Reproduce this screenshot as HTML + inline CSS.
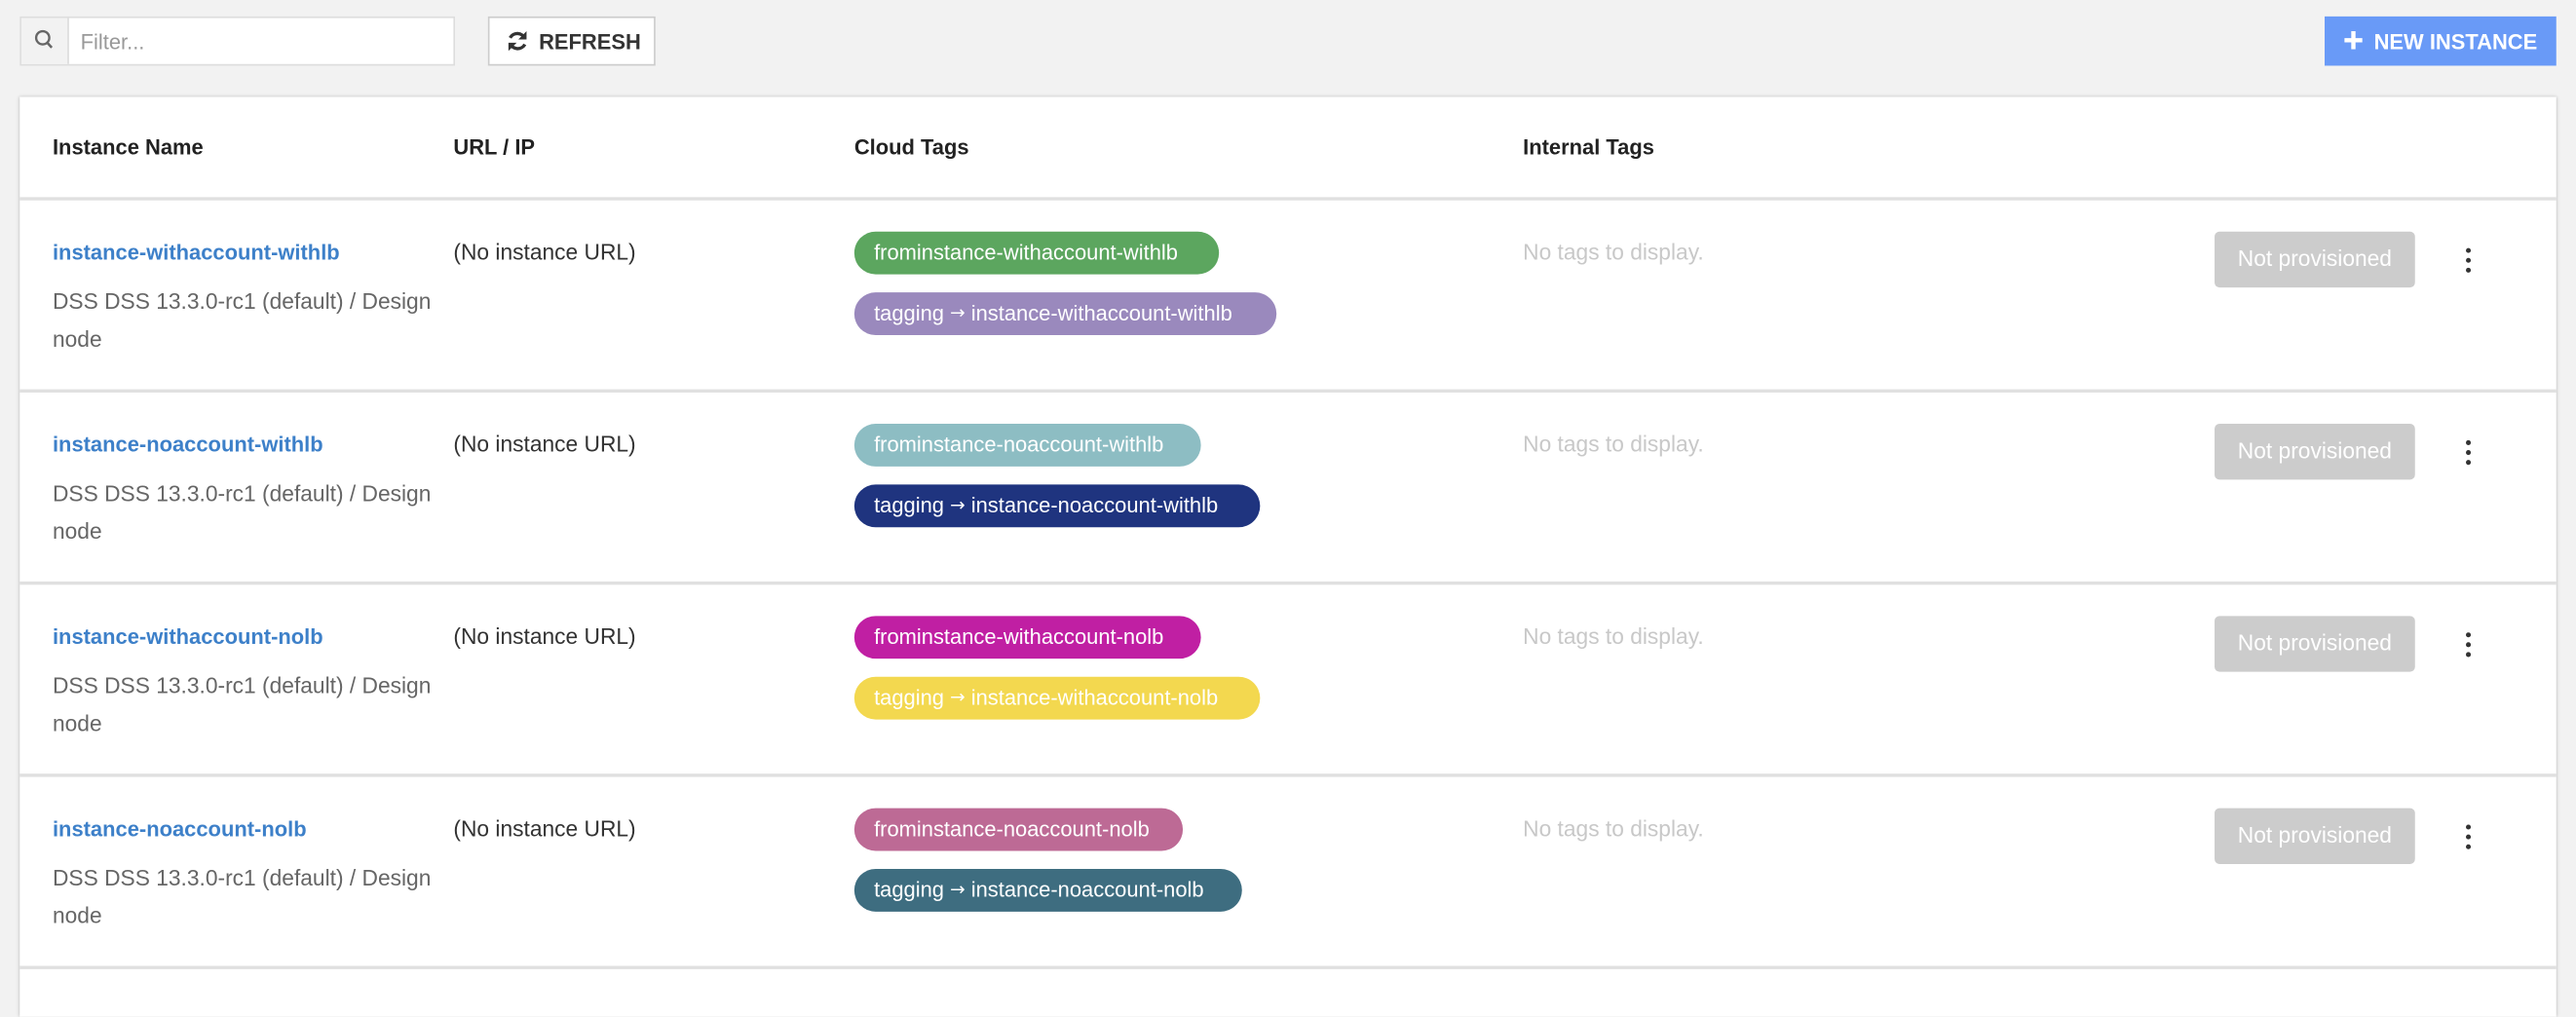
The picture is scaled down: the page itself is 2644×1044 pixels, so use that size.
<!DOCTYPE html>
<html><head><meta charset="utf-8"><style>
html,body{margin:0;padding:0;width:2644px;height:1020px;overflow:hidden;background:#f2f2f2;}
#w{position:absolute;left:0;top:0;width:1568px;height:605px;transform:scale(1.68622);transform-origin:0 0;font-family:"Liberation Sans",sans-serif;}
.a{position:absolute;white-space:nowrap;}
.filter{left:12px;top:10px;width:263px;height:28px;border:1px solid #ddd;background:#fff;}
.filter .ic{position:absolute;left:0;top:0;width:28px;height:28px;background:#f2f2f2;border-right:1px solid #ddd;}
.filter .ph{position:absolute;left:36px;top:7px;font-size:13px;color:#999;}
.btn{left:297px;top:10px;width:100px;height:28px;border:1px solid #ccc;background:#fff;font-size:13px;font-weight:bold;color:#333;}
.nb{left:1415px;top:10px;width:141px;height:30px;background:#699af7;color:#fff;font-size:13px;font-weight:bold;}
.card{left:12px;top:59px;width:1544px;height:560px;background:#fff;box-shadow:0 0 2px rgba(0,0,0,.25);}
.h{font-size:13px;font-weight:bold;color:#222;top:82px;}
.sep{left:12px;width:1544px;height:2px;background:#e0e0e0;}
.nm{font-size:13px;font-weight:bold;color:#3d80c9;left:32px;}
.ds{font-size:13.5px;color:#666;left:32px;line-height:23px;}
.url{font-size:13.5px;color:#333;left:276px;}
.nt{font-size:13.5px;color:#c8c8c8;left:927px;}
.tag{left:520px;height:26px;border-radius:13px;color:#fff;font-size:13px;line-height:26px;box-sizing:border-box;padding-left:12px;}
.tag i{font-style:normal;font-family:"DejaVu Sans",sans-serif;font-size:11px;position:relative;top:-1px;}
.np{left:1348px;width:122px;height:34px;border-radius:3px;background:#ccc;color:#fff;font-size:13.5px;line-height:34px;text-align:center;}
.dot{width:3px;height:3px;border-radius:50%;background:#333;left:1501px;}
</style></head><body><div id="w">
<div class="a filter"><div class="ic"><svg width="28" height="28" viewBox="0 0 28 28"><circle cx="13" cy="12" r="4" fill="none" stroke="#666" stroke-width="1.4"/><line x1="15.8" y1="15" x2="18.5" y2="18" stroke="#666" stroke-width="1.5"/></svg></div><div class="ph">Filter...</div></div>
<div class="a btn"><svg style="position:absolute;left:10px;top:7px" width="14" height="14" viewBox="0 0 14 14"><path d="M11.5 5.5A5 5 0 0 0 2.5 5" fill="none" stroke="#333" stroke-width="2"/><path d="M2.5 8.5A5 5 0 0 0 11.5 9" fill="none" stroke="#333" stroke-width="2"/><path d="M12.5 1v5h-5z" fill="#333"/><path d="M1.5 13V8h5z" fill="#333"/></svg><span style="position:absolute;left:30px;top:7px">REFRESH</span></div>
<div class="a nb"><svg style="position:absolute;left:12px;top:9px" width="11" height="11" viewBox="0 0 11 11"><path d="M5.5 0v11M0 5.5h11" stroke="#fff" stroke-width="2.6"/></svg><span style="position:absolute;left:30px;top:8px">NEW INSTANCE</span></div>
<div class="a card"></div>
<div class="a h" style="left:32px">Instance Name</div>
<div class="a h" style="left:276px">URL / IP</div>
<div class="a h" style="left:520px">Cloud Tags</div>
<div class="a h" style="left:927px">Internal Tags</div>
<div class="a sep" style="top:120px"></div>

<div class="a nm" style="top:146px">instance-withaccount-withlb</div>
<div class="a ds" style="top:172px">DSS DSS 13.3.0-rc1 (default) / Design<br>node</div>
<div class="a url" style="top:146px">(No instance URL)</div>
<div class="a tag" style="top:141px;width:222px;background:#5ca65f">frominstance-withaccount-withlb</div>
<div class="a tag" style="top:178px;width:257px;background:#9a89bd">tagging <i>→</i> instance-withaccount-withlb</div>
<div class="a nt" style="top:146px">No tags to display.</div>
<div class="a np" style="top:141px">Not provisioned</div>
<div class="a dot" style="top:151px"></div><div class="a dot" style="top:157px"></div><div class="a dot" style="top:163px"></div>
<div class="a sep" style="top:237px"></div>

<div class="a nm" style="top:263px">instance-noaccount-withlb</div>
<div class="a ds" style="top:289px">DSS DSS 13.3.0-rc1 (default) / Design<br>node</div>
<div class="a url" style="top:263px">(No instance URL)</div>
<div class="a tag" style="top:258px;width:211px;background:#8dbdc3">frominstance-noaccount-withlb</div>
<div class="a tag" style="top:295px;width:247px;background:#1f347f">tagging <i>→</i> instance-noaccount-withlb</div>
<div class="a nt" style="top:263px">No tags to display.</div>
<div class="a np" style="top:258px">Not provisioned</div>
<div class="a dot" style="top:268px"></div><div class="a dot" style="top:274px"></div><div class="a dot" style="top:280px"></div>
<div class="a sep" style="top:354px"></div>

<div class="a nm" style="top:380px">instance-withaccount-nolb</div>
<div class="a ds" style="top:406px">DSS DSS 13.3.0-rc1 (default) / Design<br>node</div>
<div class="a url" style="top:380px">(No instance URL)</div>
<div class="a tag" style="top:375px;width:211px;background:#c01fa3">frominstance-withaccount-nolb</div>
<div class="a tag" style="top:412px;width:247px;background:#f3d84f">tagging <i>→</i> instance-withaccount-nolb</div>
<div class="a nt" style="top:380px">No tags to display.</div>
<div class="a np" style="top:375px">Not provisioned</div>
<div class="a dot" style="top:385px"></div><div class="a dot" style="top:391px"></div><div class="a dot" style="top:397px"></div>
<div class="a sep" style="top:471px"></div>

<div class="a nm" style="top:497px">instance-noaccount-nolb</div>
<div class="a ds" style="top:523px">DSS DSS 13.3.0-rc1 (default) / Design<br>node</div>
<div class="a url" style="top:497px">(No instance URL)</div>
<div class="a tag" style="top:492px;width:200px;background:#bd6a95">frominstance-noaccount-nolb</div>
<div class="a tag" style="top:529px;width:236px;background:#3e6d80">tagging <i>→</i> instance-noaccount-nolb</div>
<div class="a nt" style="top:497px">No tags to display.</div>
<div class="a np" style="top:492px">Not provisioned</div>
<div class="a dot" style="top:502px"></div><div class="a dot" style="top:508px"></div><div class="a dot" style="top:514px"></div>
<div class="a sep" style="top:588px"></div>
</div></body></html>
